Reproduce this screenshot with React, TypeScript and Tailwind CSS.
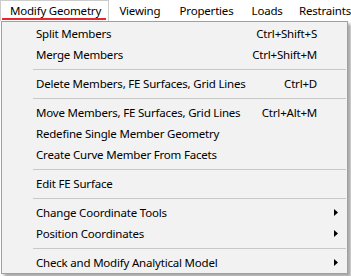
import { ReactNode } from 'react';

type Row =
  | { kind: 'item'; label: string; shortcut?: string; sub?: boolean }
  | { kind: 'sep' };

const ROWS: Row[] = [
  { kind: 'item', label: 'Split Members', shortcut: 'Ctrl+Shift+S' },
  { kind: 'item', label: 'Merge Members', shortcut: 'Ctrl+Shift+M' },
  { kind: 'sep' },
  { kind: 'item', label: 'Delete Members, FE Surfaces, Grid Lines', shortcut: 'Ctrl+D' },
  { kind: 'sep' },
  { kind: 'item', label: 'Move Members, FE Surfaces, Grid Lines', shortcut: 'Ctrl+Alt+M' },
  { kind: 'item', label: 'Redefine Single Member Geometry' },
  { kind: 'item', label: 'Create Curve Member From Facets' },
  { kind: 'sep' },
  { kind: 'item', label: 'Edit FE Surface' },
  { kind: 'sep' },
  { kind: 'item', label: 'Change Coordinate Tools', sub: true },
  { kind: 'item', label: 'Position Coordinates', sub: true },
  { kind: 'sep' },
  { kind: 'item', label: 'Check and Modify Analytical Model', sub: true },
];

function Tab({ children, className }: { children: ReactNode; className: string }) {
  return <div className={`h-full flex items-center whitespace-nowrap ${className}`}>{children}</div>;
}

function SubArrow() {
  return (
    <svg width="4" height="7" viewBox="0 0 4 7" className="mr-[9px]">
      <polygon points="0,0 4,3.5 0,7" fill="#000" />
    </svg>
  );
}

export default function App() {
  return (
    <div className="w-[351px] h-[276px] overflow-hidden bg-white text-black text-[11.5px] tracking-[-0.2px] font-['Noto_Sans',sans-serif]">
      {/* menu bar */}
      <div className="flex h-[21px]">
        <Tab className="relative w-[111px] pl-[9px] border border-b-0 border-[#cccccc]">
          Modify Geometry
          <div className="absolute left-[1px] bottom-[1px] w-[104px] h-[2px] bg-[#e8262b]" />
        </Tab>
        <Tab className="w-[61px] pl-[10px]">Viewing</Tab>
        <Tab className="w-[73px] pl-[10px]">Properties</Tab>
        <Tab className="w-[48px] pl-[10px]">Loads</Tab>
        <Tab className="pl-[10px]">Restraints</Tab>
      </div>

      {/* dropdown */}
      <div className="ml-[1px] w-[347px] pt-[1px] border border-[#a0a0a0] bg-[#f2f2f2] shadow-[3px_3px_3px_rgba(0,0,0,0.35)]">
        {ROWS.map((r, i) =>
          r.kind === 'sep' ? (
            <div key={i} className="h-[8px] flex items-center pl-[31px] pr-[1px]">
              <div className="h-px w-full bg-[#c8c8c8]" />
            </div>
          ) : (
            <div key={i} className="h-[21px] flex items-center pl-[34px] whitespace-nowrap">
              <span className="flex-1">{r.label}</span>
              {r.shortcut && <span className="mr-[30px]">{r.shortcut}</span>}
              {r.sub && <SubArrow />}
            </div>
          )
        )}
      </div>
    </div>
  );
}
